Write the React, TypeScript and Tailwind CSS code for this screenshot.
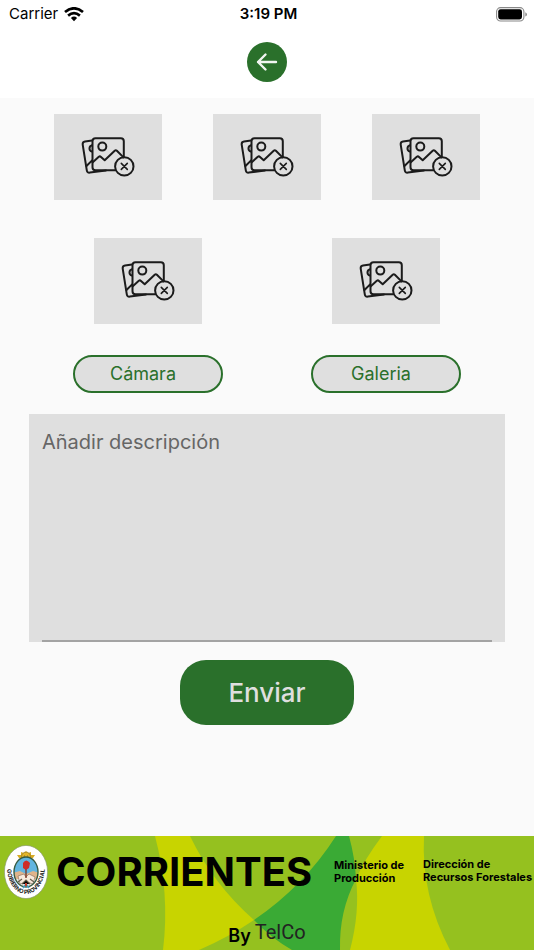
import React from "react";

function WifiIcon() {
  return (
    <svg width="20" height="15" viewBox="0 0 20 15" fill="none" stroke="#000" strokeWidth="2.7" aria-hidden="true">
      <path d="M1 5Q10 -2.4 19 5" />
      <path d="M4.1 8.6Q10 3.8 15.9 8.6" />
      <path d="M6.9 11Q10 8.2 13.1 11L10 14.2Z" fill="#000" stroke="none" />
    </svg>
  );
}

function BatteryIcon() {
  return (
    <svg width="32" height="15" viewBox="0 0 32 15" fill="none" aria-hidden="true">
      <rect x="0.6" y="0.6" width="27.3" height="13.4" rx="4" stroke="#888" strokeWidth="1.1" />
      <rect x="2.2" y="2.2" width="23.8" height="10.2" rx="2.4" fill="#000" />
      <path d="M29.3 5.2Q31 6 31 7.4T29.3 9.6Z" fill="#888" />
    </svg>
  );
}

function NoPhotoIcon() {
  return (
    <svg
      width="54"
      height="42"
      viewBox="-0.5 -1 54 42"
      fill="none"
      stroke="#1b1b1b"
      strokeWidth="2"
      strokeLinecap="round"
      strokeLinejoin="round"
      aria-hidden="true"
    >
      <path d="M10.5 3.6L3.5 4.6Q.9 5 1.2 7.6L5.3 33.3Q5.7 36 8.4 35.6L24.5 33.4" />
      <path d="M10.5 8.2Q8 9 8 11.4T10.5 14.6M5 29L10.6 23.4" />
      <path d="M34 33.2H14Q11 33.2 11 30.2V4.2Q11 1.2 14 1.2H39.3Q42.3 1.2 42.3 4.2V20" />
      <circle cx="20.8" cy="9.6" r="4" />
      <path d="M11 25.4L17.3 19.8Q18.4 18.9 19.5 19.9L23.2 23.3L33.2 13.7Q34.3 12.7 35.4 13.8L42 20.4" />
      <circle cx="42.8" cy="29.4" r="9.2" />
      <path d="M39.8 26.4L45.8 32.4M45.8 26.4L39.8 32.4" strokeWidth="1.6" />
    </svg>
  );
}

function PhotoSlot({ index }: { index: number }) {
  return (
    <button
      type="button"
      aria-label={`Foto ${index}`}
      className="flex h-[86px] w-[108px] items-center justify-center bg-[#dfdfdf]"
    >
      <NoPhotoIcon />
    </button>
  );
}

function SourceButton({ children }: { children: React.ReactNode }) {
  return (
    <button
      type="button"
      className="h-[38px] w-[150px] rounded-full border-2 border-[#2a702b] bg-[#dfdfdf] pr-2.5 text-lg leading-6 text-[#2a702b]"
    >
      {children}
    </button>
  );
}

function Seal() {
  return (
    <svg width="44" height="54" viewBox="0 0 44 54" role="img" aria-label="Gobierno Provincial" className="shrink-0">
      <defs>
        <path id="seal-ring" d="M3 22A19 27 0 0 0 41 22" />
        <clipPath id="seal-oval">
          <ellipse cx="22" cy="27" rx="12" ry="15" />
        </clipPath>
      </defs>
      <ellipse cx="22" cy="27" rx="21.6" ry="26.6" fill="#fff" stroke="#8b9b70" strokeWidth="0.7" />
      <path d="M15 13L13 10L17 10L17 7L20 8L22 6L24 8L27 7L27 10L31 10L29 13Z" fill="#d7ab25" />
      <circle cx="22" cy="11.5" r="4.4" fill="#e2b62c" stroke="#7d6927" strokeWidth="0.6" />
      <path d="M20 11H21M23 11H24M20.5 13H23.5" stroke="#71551c" strokeWidth="0.7" />
      <g clipPath="url(#seal-oval)">
        <path d="M8 10H36V29H8Z" fill="#62b5e0" />
        <path d="M8 28L16 26L22 29L29 26L36 28V35H8Z" fill="#dfb48b" />
        <path d="M8 34H36V45H8Z" fill="#e8e6df" />
        <path d="M14 31L20 29L22 32L25 29L31 32L29 39L23 37L16 39Z" fill="#f7eadc" stroke="#846757" strokeWidth="0.6" />
        <path d="M22 20V33" stroke="#793a2a" strokeWidth="1.4" />
        <path d="M19 18Q22 13 26 18L25 23L22 25L19 23Z" fill="#cf2d28" />
        <path d="M14 37L18 34M18 39L22 35L26 39M26 34L30 37" stroke="#655a48" strokeWidth="1.1" />
      </g>
      <ellipse cx="22" cy="27" rx="12" ry="15" fill="none" stroke="#365b43" strokeWidth="1.4" />
      <path d="M19 43L22 39L25 43" fill="none" stroke="#459bc5" strokeWidth="1.6" />
      <path d="M21 38H23V41H21Z" fill="#c43c2b" />
      <text fontFamily="Inter, sans-serif" fontSize="5.8" fontWeight="700" fill="#222">
        <textPath href="#seal-ring" startOffset="50%" textAnchor="middle">
          GOBIERNO PROVINCIAL
        </textPath>
      </text>
    </svg>
  );
}

function BannerArt() {
  return (
    <svg
      className="absolute inset-0 h-full w-full"
      viewBox="0 0 534 114"
      preserveAspectRatio="none"
      aria-hidden="true"
    >
      <path d="M155 0Q170 57 163 114H199Q229 101 254 84Q213 48 190 0Z" fill="#c8d400" />
      <path d="M336 0Q304 50 254 84Q271 102 292 114H340Q339 75 356 43Q355 22 349 0Z" fill="#3aaa35" />
      <path d="M382 0Q364 24 356 43Q360 76 350 114H450Q421 59 424 0Z" fill="#c8d400" />
    </svg>
  );
}

function Footer() {
  return (
    <footer className="relative mt-auto overflow-hidden bg-[#95c11f] text-black">
      <BannerArt />
      <div className="relative flex items-start pt-[9px] pl-1">
        <Seal />
        <p className="ml-2 w-[278px] pt-1 text-[40px] leading-[46px] font-bold">CORRIENTES</p>
        <div className="w-[89px] shrink-0 pt-3.5 text-[11px] leading-[13px] font-bold">
          Ministerio de
          <br />
          Producción
        </div>
        <div className="shrink-0 pt-[13px] text-[11px] leading-[13px] font-bold whitespace-nowrap">
          Dirección de
          <br />
          Recursos Forestales
        </div>
      </div>
      <div className="relative flex h-[51px] items-end justify-center gap-1 pt-5">
        <span className="text-lg leading-7 font-semibold">By</span>
        <span className="pb-1 font-[Roboto,sans-serif] text-xl leading-7 text-[#222]">TelCo</span>
      </div>
    </footer>
  );
}

export default function App() {
  return (
    <div className="flex min-h-screen flex-col bg-[#fafafa] font-[Inter,sans-serif]">
      <header className="bg-white pb-4">
        <div className="grid h-7 grid-cols-3 items-center pr-1.5 pl-[9px] text-[15px] leading-5 text-black">
          <div className="flex items-center gap-1.5">
            <span>Carrier</span>
            <WifiIcon />
          </div>
          <time className="text-center font-semibold">3:19 PM</time>
          <div className="flex justify-end">
            <BatteryIcon />
          </div>
        </div>
        <div className="flex justify-center pt-3.5">
          <button
            type="button"
            aria-label="Volver"
            className="flex size-10 items-center justify-center rounded-full bg-[#2a702b]"
          >
            <svg width="22" height="20" viewBox="0 0 22 20" fill="none" stroke="#f1f5f1" strokeWidth="2.4" strokeLinecap="round" strokeLinejoin="round">
              <path d="M20 10H2M9.5 2.5L2 10L9.5 17.5" />
            </svg>
          </button>
        </div>
      </header>

      <form className="px-[29px] pt-4" onSubmit={(event) => event.preventDefault()}>
        <div className="flex justify-around">
          <PhotoSlot index={1} />
          <PhotoSlot index={2} />
          <PhotoSlot index={3} />
        </div>
        <div className="mt-[38px] flex justify-around">
          <PhotoSlot index={4} />
          <PhotoSlot index={5} />
        </div>
        <div className="mt-[31px] flex justify-around">
          <SourceButton>Cámara</SourceButton>
          <SourceButton>Galeria</SourceButton>
        </div>
        <div className="mt-[21px] bg-[#dfdfdf] px-[13px]">
          <textarea
            aria-label="Añadir descripción"
            placeholder="Añadir descripción"
            className="block h-[228px] w-full resize-none border-b-2 border-[#a3a3a3] bg-transparent pt-3.5 text-xl leading-7 text-[#333] outline-none placeholder:text-[#666]"
          />
        </div>
        <div className="flex justify-center pt-[18px] pb-6">
          <button
            type="submit"
            className="h-[65px] w-[174px] rounded-[26px] bg-[#2a702b] text-[26px] leading-8 font-medium text-[#dfdfdf]"
          >
            Enviar
          </button>
        </div>
      </form>

      <Footer />
    </div>
  );
}
